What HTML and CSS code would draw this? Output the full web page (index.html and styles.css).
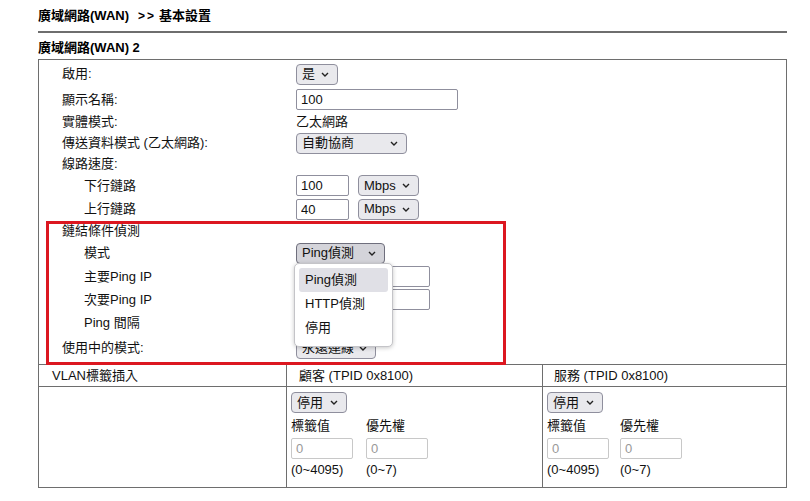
FILE: index.html
```html
<!DOCTYPE html>
<html lang="zh-Hant">
<head>
<meta charset="utf-8">
<title>廣域網路(WAN) &gt;&gt; 基本設置</title>
<link rel="stylesheet" href="styles.css">
</head>
<body>
<div class="page">
  <div class="title">廣域網路(WAN)<span class="sep">&gt;&gt;</span>基本設置</div>
  <div class="rule"></div>
  <div class="subtitle">廣域網路(WAN) 2</div>
  <div class="box">
    <div class="form">
      <div class="lbl">啟用:</div>
      <div class="val"><span class="select w42">是<svg class="chev" viewBox="0 0 8 5"><path d="M1 1l3 3 3-3"/></svg></span></div>

      <div class="lbl">顯示名稱:</div>
      <div class="val"><input class="text w162" type="text" value="100"></div>

      <div class="lbl">實體模式:</div>
      <div class="val">乙太網路</div>

      <div class="lbl">傳送資料模式 (乙太網路):</div>
      <div class="val"><span class="select w111">自動協商<svg class="chev" viewBox="0 0 8 5"><path d="M1 1l3 3 3-3"/></svg></span></div>

      <div class="lbl">線路速度:</div>
      <div class="val"></div>

      <div class="lbl sub">下行鏈路</div>
      <div class="val pair"><input class="text w53" type="text" value="100"><span class="select w61">Mbps<svg class="chev" viewBox="0 0 8 5"><path d="M1 1l3 3 3-3"/></svg></span></div>

      <div class="lbl sub">上行鏈路</div>
      <div class="val pair"><input class="text w53" type="text" value="40"><span class="select w61">Mbps<svg class="chev" viewBox="0 0 8 5"><path d="M1 1l3 3 3-3"/></svg></span></div>

      <div class="lbl">鏈結條件偵測</div>
      <div class="val"></div>

      <div class="lbl sub">模式</div>
      <div class="val"><span class="select w89 open">Ping偵測<svg class="chev" viewBox="0 0 8 5"><path d="M1 1l3 3 3-3"/></svg></span></div>

      <div class="lbl sub">主要Ping IP</div>
      <div class="val"><input class="text w134" type="text" value=""></div>

      <div class="lbl sub">次要Ping IP</div>
      <div class="val"><input class="text w134" type="text" value=""></div>

      <div class="lbl sub">Ping 間隔</div>
      <div class="val"></div>

      <div class="lbl">使用中的模式:</div>
      <div class="val"><span class="select w80">永遠連線<svg class="chev" viewBox="0 0 8 5"><path d="M1 1l3 3 3-3"/></svg></span></div>
    </div>

    <div class="highlight"></div>

    <div class="popup">
      <div class="item active">Ping偵測</div>
      <div class="item">HTTP偵測</div>
      <div class="item">停用</div>
    </div>
  </div>

  <table class="vlan">
    <tr class="head">
      <th class="c1">VLAN標籤插入</th>
      <th class="c2">顧客 (TPID 0x8100)</th>
      <th class="c3">服務 (TPID 0x8100)</th>
    </tr>
    <tr class="body">
      <td></td>
      <td>
        <div class="vcell">
          <span class="select w56 span2">停用<svg class="chev" viewBox="0 0 8 5"><path d="M1 1l3 3 3-3"/></svg></span>
          <span>標籤值</span><span>優先權</span>
          <input class="text dis" type="text" value="0" disabled>
          <input class="text dis" type="text" value="0" disabled>
          <span>(0~4095)</span><span>(0~7)</span>
        </div>
      </td>
      <td>
        <div class="vcell narrow">
          <span class="select w56 span2">停用<svg class="chev" viewBox="0 0 8 5"><path d="M1 1l3 3 3-3"/></svg></span>
          <span>標籤值</span><span>優先權</span>
          <input class="text dis" type="text" value="0" disabled>
          <input class="text dis" type="text" value="0" disabled>
          <span>(0~4095)</span><span>(0~7)</span>
        </div>
      </td>
    </tr>
  </table>
</div>
</body>
</html>
```

FILE: styles.css
```css
html, body {
  margin: 0;
  padding: 0;
  background: #fff;
}

body {
  font-family: "Liberation Sans", Arial, "Noto Sans CJK TC", sans-serif;
  font-size: 13px;
  color: #111;
}

.page {
  width: 749px;
  padding: 6px 0 0 38px;
}

.title {
  font-weight: bold;
  line-height: 20px;
  height: 20px;
  color: #000;
}

.title .sep {
  display: inline-block;
  margin: 0 3px 0 9px;
  letter-spacing: 2px;
  font-size: 12px;
}

.rule {
  height: 2px;
  margin-top: 5px;
  background: #6e6e6e;
}

.subtitle {
  margin-top: 5px;
  font-weight: bold;
  line-height: 20px;
  height: 20px;
  color: #000;
}

.box {
  position: relative;
  margin-top: 1px;
  border: 1px solid #6e6e6e;
  border-bottom: none;
  padding: 1px 0 3px 23px;
}

.form {
  display: grid;
  grid-template-columns: 234px 1fr;
  grid-template-rows: 26px 25px 20px 22px 20px 23px 24px 20px 24px 23px 23px 24px 26px;
  align-items: center;
}

.lbl {
  line-height: 16px;
  white-space: nowrap;
}

.lbl.sub {
  padding-left: 22px;
}

.val {
  display: flex;
  align-items: center;
  line-height: 16px;
}

.val.pair {
  gap: 9px;
}

.select {
  display: inline-flex;
  align-items: center;
  justify-content: space-between;
  box-sizing: border-box;
  height: 21px;
  padding: 0 8px 0 5px;
  border: 1px solid #8f8f9d;
  border-radius: 4px;
  background: #e9e9ed;
  color: #111;
  white-space: nowrap;
  line-height: 16px;
}

.select.open {
  background: #d4d4da;
  border-color: #6f6f7d;
}

.chev {
  width: 8px;
  height: 5px;
  fill: none;
  stroke: #222;
  stroke-width: 1.4;
  flex: none;
}

.w42 { width: 42px; }
.w56 { width: 56px; }
.w61 { width: 61px; }
.w80 { width: 80px; }
.w89 { width: 89px; }
.w111 { width: 111px; }

.text {
  box-sizing: border-box;
  height: 21px;
  margin: 0;
  padding: 0 4px;
  border: 1px solid #8f8f9d;
  border-radius: 2px;
  background: #fff;
  font-family: "Liberation Sans", Arial, "Noto Sans CJK TC", sans-serif;
  font-size: 13px;
  color: #111;
  outline: none;
}

.w53 { width: 53px; }
.w134 { width: 134px; }
.w162 { width: 162px; }

.text.dis {
  width: 62px;
  border-color: #c8c8c8;
  color: #999;
  background: #fff;
}

.highlight {
  position: absolute;
  left: 7px;
  top: 161px;
  width: 460px;
  height: 144px;
  box-sizing: border-box;
  border: 3px solid #dc1720;
  pointer-events: none;
}

.popup {
  position: absolute;
  left: 255px;
  top: 203px;
  width: 99px;
  box-sizing: border-box;
  padding: 4px 4px 6px;
  border: 1px solid #c4c4c8;
  border-radius: 5px;
  background: #fff;
  box-shadow: 0 1px 4px rgba(0, 0, 0, 0.22);
}

.item {
  height: 24px;
  line-height: 24px;
  padding-left: 6px;
  border-radius: 3px;
  color: #111;
}

.item.active {
  background: #e0e0e6;
}

.vlan {
  width: 749px;
  border-collapse: collapse;
  border: 1px solid #6e6e6e;
}

.vlan th,
.vlan td {
  border: 1px solid #6e6e6e;
  padding: 0;
}

.vlan th {
  height: 21px;
  font-weight: normal;
  text-align: left;
  padding-left: 12px;
  line-height: 16px;
}

.vlan th.c1 { width: 234px; padding-left: 13px; }
.vlan th.c2 { width: 243px; }
.vlan th.c3 { width: 232px; padding-left: 11px; }

.vlan td {
  vertical-align: top;
  padding: 5px 4px 6px;
}

.vcell {
  display: grid;
  grid-template-columns: 62px 62px;
  grid-template-rows: 21px 25px 21px 22px;
  column-gap: 13px;
  align-items: center;
  line-height: 16px;
  white-space: nowrap;
}

.vcell.narrow {
  column-gap: 11px;
}

.span2 {
  grid-column: 1 / 3;
  justify-self: start;
}
```
